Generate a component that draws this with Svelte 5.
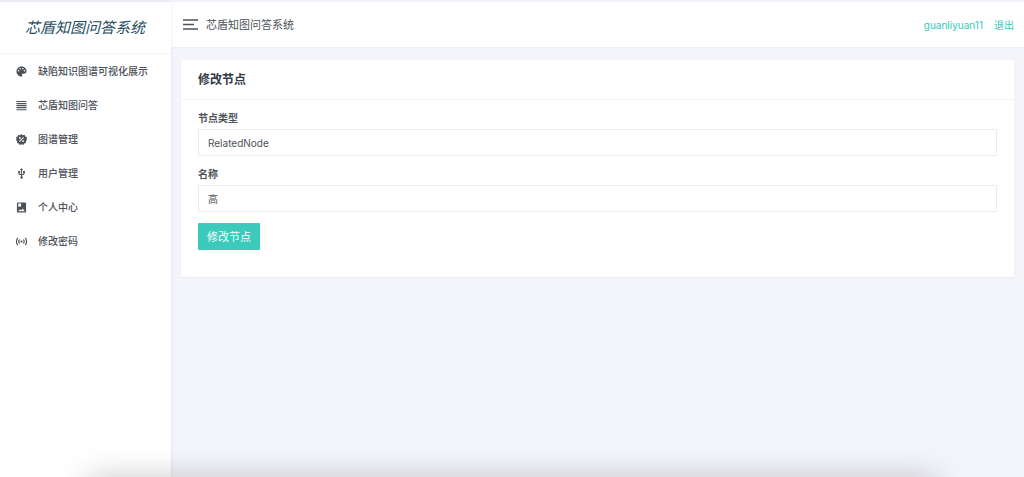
<script lang="ts">
  const title = "芯盾知图问答系统";

  const menu = [
    { icon: "palette", label: "缺陷知识图谱可视化展示" },
    { icon: "lines", label: "芯盾知图问答" },
    { icon: "sale", label: "图谱管理" },
    { icon: "usb", label: "用户管理" },
    { icon: "album", label: "个人中心" },
    { icon: "signal", label: "修改密码" },
  ];

  let nodeType = $state("RelatedNode");
  let nodeName = $state("高");
</script>

<div class="layout">
  <aside class="sidebar">
    <a class="logo" href="#home">{title}</a>
    <nav>
      <ul>
        {#each menu as item}
          <li>
            <a href="#{item.icon}">
              <svg viewBox="0 0 24 24" aria-hidden="true">
                {#if item.icon === "palette"}
                  <path fill-rule="evenodd" d="M12 1C6 1 1 6 1 12s5 11 11 11c1.100 0 1.900-.8 1.900-1.900 0-.4-.2-.9-.5-1.200-.3-.4-.5-.8-.5-1.300 0-1 .9-1.800 1.900-1.800H17.500c3 0 5.500-2.400 5.500-5.500C23 5.500 18 1 12 1zM5.500 12a1.700 1.700 0 1 1 0-3.400 1.700 1.700 0 0 1 0 3.400zm3.500-4.500a1.700 1.700 0 1 1 0-3.400 1.700 1.700 0 0 1 0 3.400zm6 0a1.700 1.700 0 1 1 0-3.400 1.700 1.700 0 0 1 0 3.400zm3.500 4.500a1.700 1.700 0 1 1 0-3.400 1.700 1.700 0 0 1 0 3.400z" />
                {:else if item.icon === "lines"}
                  <path d="M1 2h22v2.500H1zM1 6.500h22V9H1zM1 11h22v2.500H1zM1 15.500h22V18H1zM1 20h22v2.500H1z" />
                {:else if item.icon === "sale"}
                  <path fill-rule="evenodd" d="M12 0l2.900 2.500 3.900-.7 1.300 3.700 3.700 1.300-.8 3.900L24 13l-2.500 2.800.3 3.900-3.900.8-2 3.500-3.900-1.500L8.100 24l-2-3.500-3.900-.8.3-3.900L0 13l1-2.300L.2 6.800l3.700-1.300 1.300-3.700 3.900.7zM8.500 6.500a2 2 0 1 0 0 4 2 2 0 0 0 0-4zm7.500.2L6.700 16 8 17.300 17.300 8zm-.5 6.800a2 2 0 1 0 0 4 2 2 0 0 0 0-4z" />
                {:else if item.icon === "usb"}
                  <path d="M15 7v4h1v2h-3V5h2.500L12 0 8.500 5H11v8H8v-2.100a2.500 2.500 0 1 0-2.500-.2V13A2.500 2.500 0 0 0 8 15.500h3v2.800a2.700 2.700 0 1 0 2.500 0v-2.800H16a2.500 2.500 0 0 0 2.500-2.500v-2h1V6.500z" />
                {:else if item.icon === "album"}
                  <path fill-rule="evenodd" d="M4 1h16a2 2 0 0 1 2 2v18a2 2 0 0 1-2 2H4a2 2 0 0 1-2-2V3a2 2 0 0 1 2-2zm1 2v8l3-2 3 2V3zm0 17h14l-4.500-6-3.500 4.500L8.500 16z" />
                {:else}
                  <g fill="none" stroke="currentColor" stroke-width="2.500">
                    <path d="M4 4C0 8 0 16 4 20M8 8c-2.500 2.500-2.500 5.500 0 8M20 4c4 4 4 12 0 16M16 8c2.500 2.500 2.500 5.500 0 8" />
                  </g>
                  <circle cx="12" cy="12" r="2.300" />
                {/if}
              </svg>
              <span>{item.label}</span>
            </a>
          </li>
        {/each}
      </ul>
    </nav>
  </aside>

  <div class="content">
    <header>
      <button class="toggler" type="button" aria-label="菜单">
        <svg viewBox="0 0 15 11" aria-hidden="true">
          <path d="M0 1h15M0 5.500h11M0 10h15" />
        </svg>
      </button>
      <span class="page-title">{title}</span>
      <div class="user">
        <a href="#profile">guanliyuan11</a>
        <a href="#logout">退出</a>
      </div>
    </header>

    <main>
      <section class="card">
        <h4>修改节点</h4>
        <form onsubmit={(e) => e.preventDefault()}>
          <label for="node-type">节点类型</label>
          <input id="node-type" type="text" bind:value={nodeType} />
          <label for="node-name">名称</label>
          <input id="node-name" type="text" bind:value={nodeName} />
          <button class="submit" type="submit">修改节点</button>
        </form>
      </section>
    </main>
  </div>

  <div class="shade"></div>
</div>

<style>
  :global(body) {
    margin: 0;
    background: #f4f5fa;
  }

  .layout {
    position: relative;
    display: flex;
    box-sizing: border-box;
    min-height: 100vh;
    border-top: 2px solid #f0f1fa;
    color: #4d5259;
    font-family: Inter, "Noto Sans CJK SC", sans-serif;
    font-size: 10px;
    line-height: 16px;
  }

  a {
    text-decoration: none;
  }

  .sidebar {
    flex: 0 0 171px;
    background: #fff;
    box-shadow: 0 0 4px rgba(0, 0, 0, 0.08);
    z-index: 1;
  }

  .logo {
    display: block;
    padding: 0 0 2px 25px;
    border-bottom: 1px solid #f5f5f7;
    color: #1d4b60;
    font-family: KaiTi, STKaiti, "Noto Sans CJK SC", serif;
    font-size: 15px;
    font-style: italic;
    line-height: 49px;
  }

  ul {
    margin: 0;
    padding: 0;
    list-style: none;
  }

  li a {
    display: flex;
    align-items: center;
    gap: 11px;
    height: 34px;
    padding-left: 16px;
    color: #4d5259;
    font-weight: 500;
  }

  li svg {
    width: 11px;
    height: 11px;
    fill: currentColor;
  }

  .content {
    flex: 1;
    min-width: 0;
  }

  header {
    display: flex;
    align-items: center;
    height: 45px;
    padding: 0 10px 0 12px;
    background: #fff;
    box-shadow: 0 1px 2px rgba(0, 0, 0, 0.04);
  }

  .toggler {
    display: flex;
    margin-right: 8px;
    padding: 0;
    border: 0;
    background: none;
    color: #4d5259;
  }

  .toggler svg {
    width: 15px;
    height: 11px;
    stroke: currentColor;
    stroke-width: 1.5;
  }

  .page-title {
    font-size: 11px;
  }

  .user {
    display: flex;
    gap: 11px;
    margin-left: auto;
  }

  .user a {
    color: #33cabb;
  }

  main {
    padding: 13px 10px;
  }

  .card {
    background: #fff;
    box-shadow: 0 1px 2px rgba(0, 0, 0, 0.05);
  }

  h4 {
    margin: 0;
    padding: 0 17px;
    border-bottom: 1px solid #f3f4f6;
    color: #313944;
    font-size: 12px;
    font-weight: 600;
    line-height: 39px;
  }

  form {
    padding: 10px 17px 27px;
  }

  label {
    display: block;
    margin-bottom: 3px;
    font-weight: 600;
  }

  input {
    display: block;
    box-sizing: border-box;
    width: 100%;
    height: 27px;
    margin-bottom: 10px;
    padding: 0 9px;
    border: 1px solid #ebebeb;
    border-radius: 1px;
    background: #fff;
    color: #4d5259;
    font: inherit;
  }

  .submit {
    height: 27px;
    margin-top: 1px;
    padding: 0 9px;
    border: 0;
    border-radius: 1px;
    background: #3bcabb;
    color: #fff;
    font: inherit;
    font-size: 11px;
  }

  .shade {
    position: absolute;
    right: 0;
    bottom: 0;
    left: 0;
    height: 32px;
    overflow: hidden;
    pointer-events: none;
    z-index: 2;
  }

  .shade::after {
    content: "";
    position: absolute;
    top: 100%;
    right: 88px;
    left: 88px;
    height: 20px;
    box-shadow: 0 4px 32px rgba(0, 0, 0, 0.3);
  }
</style>
